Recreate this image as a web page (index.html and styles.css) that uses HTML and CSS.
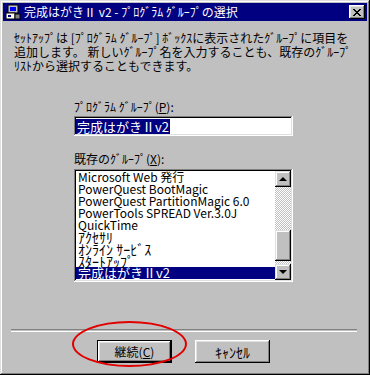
FILE: index.html
```html
<!DOCTYPE html>
<html>
<head>
  <link rel="stylesheet" href="styles.css">
</head>
<body>
  <div class="window">
    <div class="titlebar">
      <svg class="app-icon" width="16" height="16" viewBox="0 0 16 16">
        <rect x="3" y="1" width="10" height="8" fill="#c0c0c0" stroke="#000" stroke-width="1"/>
        <rect x="5" y="3" width="6" height="4" fill="#0000ff"/>
        <rect x="1" y="9" width="9" height="6" fill="#fff" stroke="#000" stroke-width="1"/>
        <rect x="3" y="11" width="3" height="2" fill="#000080"/>
        <rect x="10" y="10" width="5" height="5" fill="#808080" stroke="#000" stroke-width="1"/>
      </svg>
      <span class="title">完成はがきⅡ v2 - ﾌﾟﾛｸﾞﾗﾑ ｸﾞﾙｰﾌﾟの選択</span>
      <button class="close-btn" type="button">
        <svg width="8" height="7" viewBox="0 0 8 7">
          <path d="M0 0h2v1h1v1h2v-1h1v-1h2v1h-1v1h-1v1h-1v1h1v1h1v1h1v1h-2v-1h-1v-1h-2v1h-1v1h-2v-1h1v-1h1v-1h1v-1h-1v-1h-1v-1h-1z" fill="#000"/>
        </svg>
      </button>
    </div>

    <div class="content">
      <p class="intro">ｾｯﾄｱｯﾌﾟは [ﾌﾟﾛｸﾞﾗﾑ ｸﾞﾙｰﾌﾟ] ﾎﾞｯｸｽに表示されたｸﾞﾙｰﾌﾟに項目を<br>追加します。 新しいｸﾞﾙｰﾌﾟ名を入力することも、既存のｸﾞﾙｰﾌﾟ<br>ﾘｽﾄから選択することもできます。</p>

      <div class="field">
        <label class="field-label">ﾌﾟﾛｸﾞﾗﾑ ｸﾞﾙｰﾌﾟ(<u>P</u>):</label>
        <div class="textbox"><span class="sel">完成はがきⅡv2</span></div>
      </div>

      <div class="field field-list">
        <label class="field-label">既存のｸﾞﾙｰﾌﾟ(<u>X</u>):</label>
        <div class="listbox">
          <ul class="items">
            <li>Microsoft Web 発行</li>
            <li>PowerQuest BootMagic</li>
            <li>PowerQuest PartitionMagic 6.0</li>
            <li>PowerTools SPREAD Ver.3.0J</li>
            <li>QuickTime</li>
            <li class="kana">ｱｸｾｻﾘ</li>
            <li class="kana">ｵﾝﾗｲﾝ ｻｰﾋﾞｽ</li>
            <li class="kana">ｽﾀｰﾄｱｯﾌﾟ</li>
            <li class="selected">完成はがきⅡv2</li>
          </ul>
          <div class="scrollbar">
            <div class="sb-btn"><span class="arrow-up"></span></div>
            <div class="sb-track sb-track-top"></div>
            <div class="sb-thumb"></div>
            <div class="sb-track sb-track-bottom"></div>
            <div class="sb-btn"><span class="arrow-down"></span></div>
          </div>
        </div>
      </div>
    </div>

    <div class="separator"></div>

    <div class="buttons">
      <button class="btn btn-default" type="button">継続(<u>C</u>)</button>
      <button class="btn btn-kana" type="button">ｷｬﾝｾﾙ</button>
      <!-- red annotation circle -->
      <div class="mark"></div>
    </div>
  </div>
</body>
</html>
```

FILE: styles.css
```css
body {
  margin: 0;
  background: #c0c0c0;
  font-family: "MS UI Gothic", "Noto Sans CJK JP", sans-serif;
  font-size: 12px;
  color: #000;
}

.window {
  position: relative;
  width: 370px;
  height: 375px;
  box-sizing: border-box;
  padding: 3px;
  background: #c0c0c0;
  box-shadow: inset -1px -1px #000, inset 1px 1px #dfdfdf,
              inset -2px -2px #808080, inset 2px 2px #fff;
}

.titlebar {
  display: flex;
  align-items: center;
  height: 18px;
  background: #000080;
  padding: 0 2px;
}

.app-icon {
  flex: none;
  margin-right: 3px;
}

.title {
  flex: 1;
  color: #fff;
  line-height: 18px;
  white-space: nowrap;
}

.close-btn {
  display: flex;
  align-items: center;
  justify-content: center;
  width: 16px;
  height: 14px;
  padding: 0;
  border: none;
  background: #c0c0c0;
  box-shadow: inset -1px -1px #000, inset 1px 1px #fff,
              inset -2px -2px #808080, inset 2px 2px #dfdfdf;
}

.content {
  padding: 10px 0 0 11px;
}

.intro {
  margin: 0;
  line-height: 14px;
  white-space: nowrap;
}

.field {
  display: flex;
  flex-direction: column;
  align-items: flex-start;
  margin: 27px 0 0 60px;
}

.field-list {
  margin-top: 16px;
}

.field-label {
  line-height: 13px;
  margin-bottom: 3px;
}

.field-list .field-label {
  margin-bottom: 4px;
}

.textbox {
  box-sizing: border-box;
  width: 219px;
  height: 20px;
  padding: 2px 2px;
  background: #fff;
  box-shadow: inset -1px -1px #fff, inset 1px 1px #808080,
              inset -2px -2px #dfdfdf, inset 2px 2px #000;
}

.sel {
  display: inline-block;
  padding: 0 1px;
  line-height: 15px;
  font-size: 13px;
  background: #000080;
  color: #fff;
}

.listbox {
  display: flex;
  box-sizing: border-box;
  width: 219px;
  height: 113px;
  padding: 2px;
  background: #fff;
  box-shadow: inset -1px -1px #fff, inset 1px 1px #808080,
              inset -2px -2px #dfdfdf, inset 2px 2px #000;
}

.items {
  flex: 1;
  margin: 0;
  padding: 0;
  list-style: none;
}

.items li {
  height: 12px;
  line-height: 12px;
  font-size: 12px;
  padding-left: 2px;
  white-space: nowrap;
}

.items .kana {
  font-size: 14px;
}

.items .selected {
  background: #000080;
  color: #fff;
  font-size: 13px;
}

.scrollbar {
  display: flex;
  flex-direction: column;
  width: 16px;
}

.sb-btn,
.sb-thumb {
  box-sizing: border-box;
  background: #c0c0c0;
  box-shadow: inset -1px -1px #000, inset 1px 1px #dfdfdf,
              inset -2px -2px #808080, inset 2px 2px #fff;
}

.sb-btn {
  display: flex;
  align-items: center;
  justify-content: center;
  height: 16px;
}

.sb-track {
  background: repeating-conic-gradient(#c0c0c0 0 25%, #fff 0 50%) 0 0 / 2px 2px;
}

.sb-track-top {
  height: 43px;
}

.sb-thumb {
  height: 31px;
}

.sb-track-bottom {
  flex: 1;
}

.arrow-up,
.arrow-down {
  width: 0;
  height: 0;
  border-left: 4px solid transparent;
  border-right: 4px solid transparent;
}

.arrow-up {
  border-bottom: 4px solid #000;
}

.arrow-down {
  border-top: 4px solid #000;
}

.separator {
  margin: 47px 10px 0 8px;
  height: 1px;
  border-top: 1px solid #808080;
  border-bottom: 1px solid #fff;
}

.buttons {
  position: relative;
  display: flex;
  gap: 23px;
  padding: 8px 0 0 94px;
}

.btn {
  width: 75px;
  height: 23px;
  padding: 0;
  border: none;
  background: #c0c0c0;
  font-family: inherit;
  font-size: 12px;
  color: #000;
  box-shadow: inset -1px -1px #000, inset 1px 1px #fff,
              inset -2px -2px #808080, inset 2px 2px #dfdfdf;
}

.btn-kana {
  font-size: 14px;
}

.btn-default {
  box-shadow: inset 0 0 0 1px #000, inset -2px -2px #000, inset 2px 2px #fff,
              inset -3px -3px #808080, inset 3px 3px #dfdfdf;
}

.mark {
  position: absolute;
  left: 69px;
  top: -11px;
  width: 111px;
  height: 42px;
  border: 2px solid #e00000;
  border-radius: 50%;
}
```
